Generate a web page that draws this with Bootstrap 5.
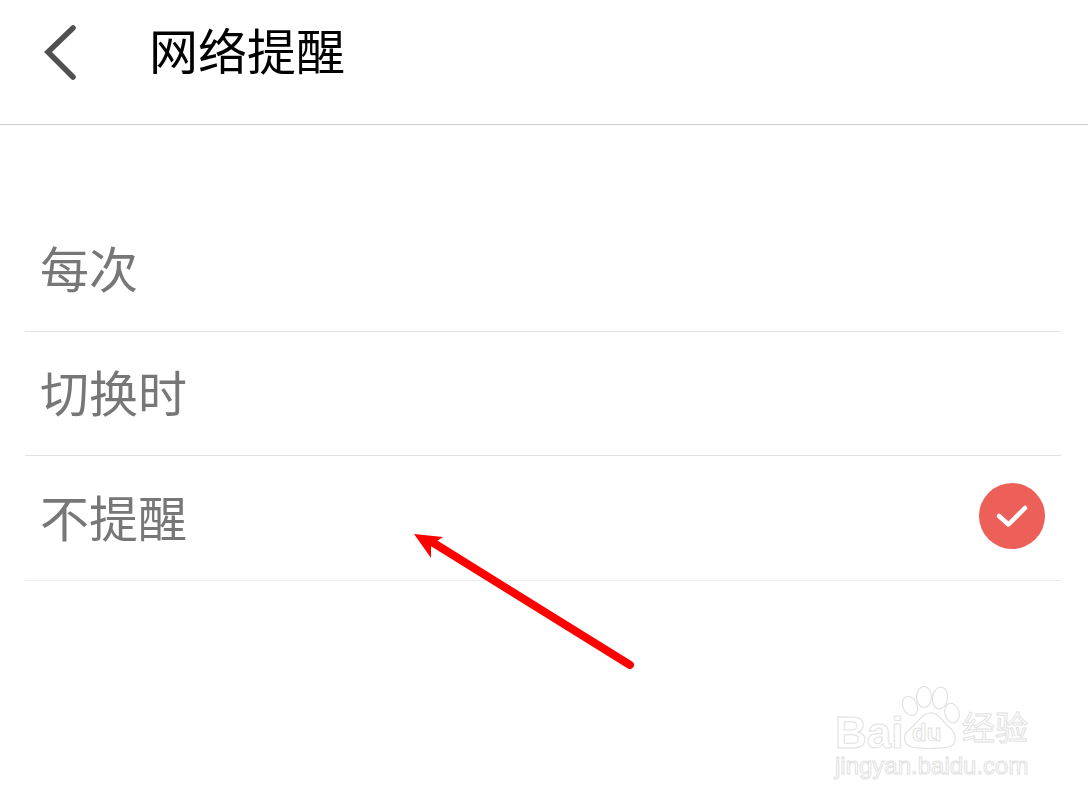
<!DOCTYPE html>
<html lang="zh-CN">
<head>
  <meta charset="UTF-8" />
  <meta name="viewport" content="width=device-width, initial-scale=1.0" />
  <title>网络提醒</title>
  <link href="https://cdn.jsdelivr.net/npm/bootstrap@5.3.3/dist/css/bootstrap.min.css" rel="stylesheet" />
  <style>
    html, body { height: 100%; }
    body {
      margin: 0;
      background: #fff;
      overflow: hidden;
      position: relative;
      font-family: "Liberation Sans", "Noto Sans CJK SC", sans-serif;
    }
    .top-bar {
      height: 125px;
      padding-left: 43px;
      border-bottom: 1px solid #cdcdcd;
    }
    .back-btn { width: 36px; height: 56px; margin-right: 70px; margin-top: -19px; }
    .top-title { font-size: 49px; line-height: 1; color: #000; margin-top: -18px; }
    .opt-list { padding: 82px 27px 0 25px; }
    .opt-row {
      height: 124.5px;
      border-bottom: 1px solid #e2e2e2;
      padding-left: 15px;
      padding-right: 16px;
      font-size: 49px;
      color: #777;
    }
    .opt-row:last-child { border-bottom-color: #ececec; }
    .opt-row span { margin-top: 5px; }
    .check-dot { width: 66px; height: 66px; margin-top: -3px; }
    .arrow-mark { position: absolute; left: 410px; top: 528px; width: 230px; height: 145px; }
    .wm {
      position: absolute;
      left: 832px;
      top: 684px;
      width: 205px;
      height: 100px;
      color: #fff;
      -webkit-text-stroke: 1px #e2e2e2;
      font-family: "Liberation Sans", "Noto Sans CJK SC", sans-serif;
    }
    .wm-paw { position: absolute; left: 70px; top: 2px; width: 58px; height: 63px; }
    .wm-bai { position: absolute; left: 3px; top: 29px; font-size: 44px; line-height: .9; font-weight: 700; }
    .wm-du { position: absolute; left: 80px; top: 37px; font-size: 24px; line-height: 1; font-weight: 700; }
    .wm-cn { position: absolute; left: 130px; top: 28px; font-size: 33px; line-height: 1; }
    .wm-url { position: absolute; left: 3px; top: 70px; font-size: 24px; line-height: 1; white-space: nowrap; }
  </style>
</head>
<body>

<header class="top-bar d-flex align-items-center">
  <svg class="back-btn" viewBox="0 0 36 56" fill="none" stroke="#505050" stroke-width="5.5" stroke-linecap="round" stroke-linejoin="miter">
    <path d="M30 3 L5 27 L30 52" />
  </svg>
  <div class="top-title">网络提醒</div>
</header>

<div class="opt-list">
  <div class="opt-row d-flex align-items-center justify-content-between"><span>每次</span></div>
  <div class="opt-row d-flex align-items-center justify-content-between"><span>切换时</span></div>
  <div class="opt-row d-flex align-items-center justify-content-between">
    <span>不提醒</span>
    <svg class="check-dot" viewBox="0 0 66 66">
      <circle cx="33" cy="33" r="33" fill="#ec6059" />
      <path d="M20 33 L29.5 41.5 L46 25" fill="none" stroke="#fff" stroke-width="4.5" stroke-linecap="round" stroke-linejoin="round" />
    </svg>
  </div>
</div>

<svg class="arrow-mark" viewBox="0 0 230 145">
  <path d="M220 137 L22 14" stroke="#ff0000" stroke-width="8" stroke-linecap="round" fill="none" />
  <path d="M4 6 L33 9 L21 17 L21 30 Z" fill="#ff0000" />
</svg>

<div class="wm">
  <div class="wm-bai">Bai</div>
  <svg class="wm-paw" viewBox="0 0 58 63" fill="#fff" stroke="#e2e2e2" stroke-width="1.2">
    <ellipse cx="8" cy="20" rx="7" ry="10" transform="rotate(-25 8 20)" />
    <ellipse cx="22" cy="11" rx="7.5" ry="10.5" />
    <ellipse cx="38" cy="12" rx="7.5" ry="11" transform="rotate(8 38 12)" />
    <ellipse cx="50" cy="27" rx="7" ry="10" transform="rotate(-15 50 27)" />
    <path d="M28 27 C36 26 41 36 47 41 C56 48 55 60 46 61 C36 63 20 63 10 61 C1 59 0 48 8 43 C15 38 19 28 28 27 Z" />
  </svg>
  <div class="wm-du">du</div>
  <div class="wm-cn">经验</div>
  <div class="wm-url">jingyan.baidu.com</div>
</div>

</body>
</html>
